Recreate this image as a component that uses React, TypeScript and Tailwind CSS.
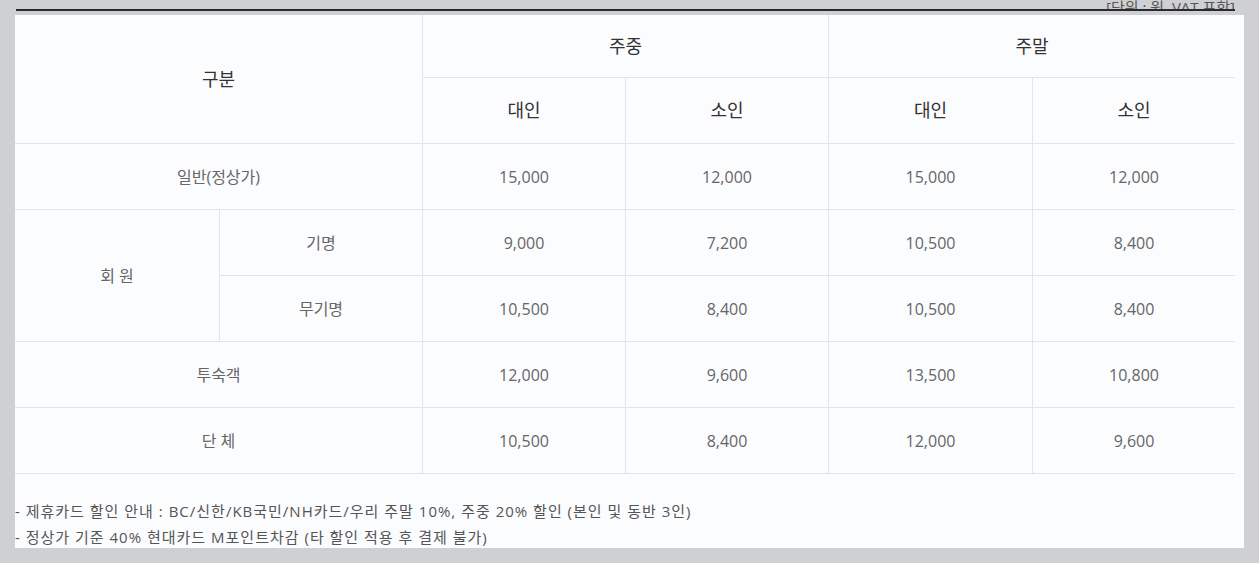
const FONT = { fontFamily: '"Open Sans", "Noto Sans CJK KR", sans-serif' }

const line = 'border-[#e3e3ef]'
const head = `flex items-center justify-center text-[18px] text-[#333] ${line}`
const cell = `flex items-center justify-center text-[16px] text-[#666] ${line}`

type Row = { label: string; values: string[] }

const general: Row = { label: '일반(정상가)', values: ['15,000', '12,000', '15,000', '12,000'] }
const members: Row[] = [
  { label: '기명', values: ['9,000', '7,200', '10,500', '8,400'] },
  { label: '무기명', values: ['10,500', '8,400', '10,500', '8,400'] },
]
const rest: Row[] = [
  { label: '투숙객', values: ['12,000', '9,600', '13,500', '10,800'] },
  { label: '단 체', values: ['10,500', '8,400', '12,000', '9,600'] },
]

function Values({ values }: { values: string[] }) {
  return (
    <>
      {values.map((v, i) => (
        <div key={i} className={`${cell} border-l border-b`}>
          {v}
        </div>
      ))}
    </>
  )
}

export default function App() {
  return (
    <div className="w-[1259px] h-[563px] overflow-hidden bg-[#cfd0d4] pl-[15px]" style={FONT}>
      <div className="w-[1220px] h-[9px] overflow-hidden flex items-end justify-end">
        <span className="text-[15px] leading-[20px] text-[#555] -mb-[8px]">[단위 : 원, VAT 포함]</span>
      </div>
      <div className="ml-px w-[1219px] h-[2px] bg-[#2a2a2e]" />
      <div className="mt-[4px] w-[1229px] h-[533px] bg-[#fbfcfe]">
        <div className="grid w-[1220px] grid-cols-[204px_203px_203px_203px_204px_203px] grid-rows-[63px_66px_66px_66px_66px_66px_66px]">
          <div className={`${head} col-span-2 row-span-2 border-b`}>구분</div>
          <div className={`${head} col-span-2 border-l border-b`}>주중</div>
          <div className={`${head} col-span-2 border-l border-b`}>주말</div>
          {['대인', '소인', '대인', '소인'].map((t, i) => (
            <div key={i} className={`${head} border-l border-b`}>
              {t}
            </div>
          ))}

          <div className={`${cell} col-span-2 border-b`}>{general.label}</div>
          <Values values={general.values} />

          <div className={`${cell} row-span-2 border-b`}>회 원</div>
          <div className={`${cell} border-l border-b`}>{members[0].label}</div>
          <Values values={members[0].values} />
          <div className={`${cell} border-l border-b`}>{members[1].label}</div>
          <Values values={members[1].values} />

          {rest.map((r) => (
            <div key={r.label} className="contents">
              <div className={`${cell} col-span-2 border-b`}>{r.label}</div>
              <Values values={r.values} />
            </div>
          ))}
        </div>

        <div className="mt-[24px] text-[15px] leading-[26px] tracking-[1px] text-[#555]">
          <p>- 제휴카드 할인 안내 : BC/신한/KB국민/NH카드/우리 주말 10%, 주중 20% 할인 (본인 및 동반 3인)</p>
          <p>- 정상가 기준 40% 현대카드 M포인트차감 (타 할인 적용 후 결제 불가)</p>
        </div>
      </div>
    </div>
  )
}
